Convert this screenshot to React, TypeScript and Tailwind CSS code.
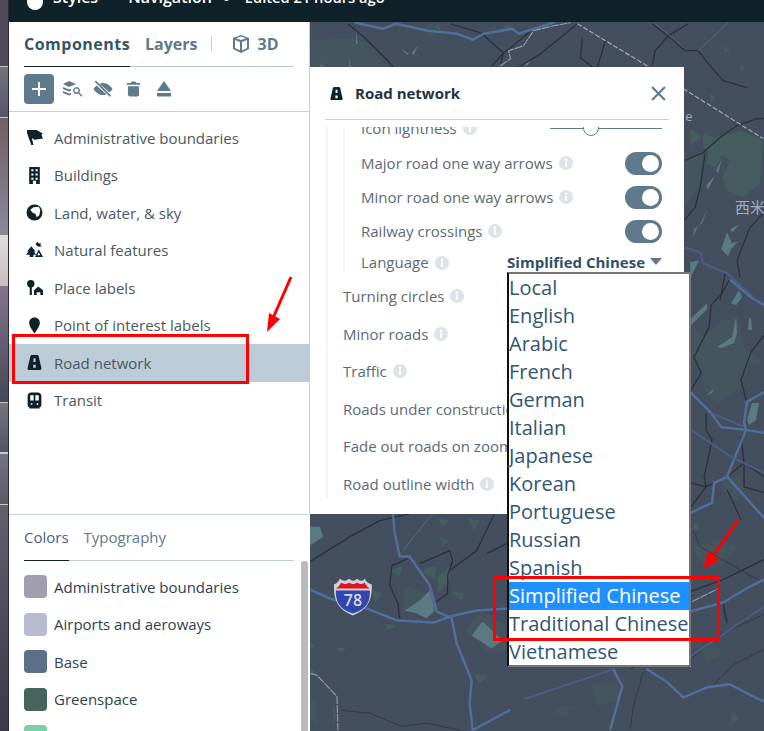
import React from "react";

const Icons: Record<string, React.ReactNode> = {
  flag: <path fill="currentColor" d="M1 1h9l6 3.500-1.500 1L16 9l-8 1-2.500-1.500L7 15 5 15 1 4z" />,
  building: <path fill="currentColor" fillRule="evenodd" d="M3 0h10v16H9.500v-3h-3v3H3zM5 2v2h2V2zm4 0v2h2V2zM5 6v2h2V6zm4 0v2h2V6zM5 10v2h2v-2zm4 0v2h2v-2z" />,
  globe: <path fill="currentColor" fillRule="evenodd" d="M8 0.500a7.500 7.500 0 1 0 0 15 7.500 7.500 0 0 0 0-15zM7 3l5-.500 1.500 3-1 5-2.500 2-1-3-3-1.500L4 5.500z" />,
  nature: <path fill="currentColor" fillRule="evenodd" d="M5 4l4 5H7.500l2 3H7v2H3.500v-2H0l2.500-3H1zM12 7l4 7h-7.500zm0 2.800L10.500 12.500h3zM11 0l1 1.500L14 1l-.500 2 1.500 1-3 .500L10 3.500 9 1.500z" />,
  place: <path fill="currentColor" fillRule="evenodd" d="M4.500 1a3.500 3.500 0 0 1 3.500 3.500c0 1.500-.8 3-2.500 3.500v7h-2V8C2 7.500 1 6 1 4.500A3.500 3.500 0 0 1 4.500 1zM11.500 7L16 10.500V15h-2.500v-2.500h-3.500V15H7.500v-4.500z" />,
  pin: <path fill="currentColor" d="M8 0.500c3 0 5 2.300 5 5 0 3.500-3 7-5 10-2-3-5-6.500-5-10 0-2.700 2-5 5-5z" />,
  road: <path fill="currentColor" fillRule="evenodd" d="M5.500 1h5c.7 0 1.200.4 1.400 1.100L14.500 13.500c.2 1-.4 1.500-1.200 1.500H2.700c-.8 0-1.400-.5-1.200-1.500L4.100 2.100C4.300 1.400 4.800 1 5.500 1zM7 4v3.500h2V4zM6.800 10v3h2.400v-3z" />,
  transit: <path fill="currentColor" fillRule="evenodd" d="M5 0.500h6c2.200 0 3.500 1.300 3.500 3.500v8c0 1.500-.9 2.500-2 2.800L13 15.500H3l.5-.7c-1.100-.3-2-1.300-2-2.800V4C1.500 1.800 2.800.500 5 .500zM4 3v5h3.200V3zm4.800 0v5H12V3zM4.500 10.500v1.500H6v-1.500zm5.500 0v1.500h1.500v-1.500z" />,
};

function Icon({ name, className }: { name: string; className: string }) {
  return (
    <svg viewBox="0 0 16 16" className={className}>
      {Icons[name]}
    </svg>
  );
}

function Info() {
  return (
    <svg viewBox="0 0 14 14" className="w-[14px] h-[14px] shrink-0 ml-[6px]">
      <circle cx="7" cy="7" r="7" fill="#dde3e9" />
      <circle cx="7" cy="3.800" r="1.200" fill="#fff" />
      <rect x="6" y="5.800" width="2" height="5.200" fill="#fff" />
    </svg>
  );
}

function Toggle() {
  return (
    <div className="w-[37px] h-[23px] rounded-full bg-[#5f7a8c] flex items-center justify-end pr-[3px]">
      <div className="w-[17px] h-[17px] rounded-full bg-white" />
    </div>
  );
}

const components = [
  ["flag", "Administrative boundaries"],
  ["building", "Buildings"],
  ["globe", "Land, water, & sky"],
  ["nature", "Natural features"],
  ["place", "Place labels"],
  ["pin", "Point of interest labels"],
  ["road", "Road network"],
  ["transit", "Transit"],
];

const swatches = [
  ["bg-[#a09fb0]", "Administrative boundaries"],
  ["bg-[#b8bcd0]", "Airports and aeroways"],
  ["bg-[#5a7088]", "Base"],
  ["bg-[#46635c]", "Greenspace"],
  ["bg-[#7dd0a5]", ""],
];

const languages = [
  "Local", "English", "Arabic", "French", "German", "Italian", "Japanese", "Korean",
  "Portuguese", "Russian", "Spanish", "Simplified Chinese", "Traditional Chinese", "Vietnamese",
];

function MapArt() {
  const soft = "#45555e";
  const green = "#455d5f";
  const lake = "#5a7a84";
  const blue = "#526e9b";
  const purple = "#4d5b85";
  const dark = "#2b3138";
  const thin = "#343b44";
  return (
    <svg viewBox="309 22 455 709" className="absolute inset-0 w-full h-full" fill="none">
      <g className="blur-[0.4px]">
        <g fill={soft}>
          <path d="M310 40l40-3 17 6 20 24h-77zM691 323l13 14 17-17 16-3 7 30 20 16h-13l-10 24-24 16-13-10-3-16-7-17-3-7zM685 160l18-8-4 35-14 20zM693 547l30-7 14 7-14 20-20 0zM404 586l22 8 10 20-34-3zM464 631l16-19 25 13 1 25-17 4zM590 687l27-4 3 17-23 7zM557 707l16 0-6 10-14-4zM309 700l8 5 0 20-8-3zM420 30l10-8 6 10-8 6zM720 480l20-2 6 18-16 6zM700 650l12-10 10 15-15 8z" />
        </g>
        <g fill={green}>
          <path d="M703 133l12 4 25-7 23 10-3 43-17 14-16-7-5-13 8-17-8-5-6 12-9-4 1-11-5-5zM437 577l12-10 0 14-12 13zM387 571l15-4-3 9zM372 591l10 3-8 9zM384 624l12 2-10 5zM334 649l12-1-6 5zM424 569l12-2-2 12-11-5zM451 592l12 2-2 8zM472 674l15 3-8 7zM437 518l12 3-7 7zM439 537l10 3-7 7zM467 518l12 3-5 10zM309 667l7 7-5 3zM309 642l5 4-5 4zM332 702l3 15-3 10zM733 710l5 10-8 7zM724 45l6 5-6 3zM710 93l6 4-5 5zM740 64l5 3-4 4zM500 30l8-8 3 8zM433 27l5-5 2 8zM690 530l7-8 2 8zM690 128l12 8-12 10z" />
        </g>
        <g fill={lake}>
          <path d="M309 527l10 0 3 10-13 9zM404 611l15-10 10-10 5 20-8 8-10-5zM471 636l11-14 20 19-11 8zM691 318l16-15 0 6-16 16zM731 303l8-13 3 7-6 8zM749 318l2 0 1 12-4 0zM717 347l15-10 4-20 1 16-3 10-12 5zM707 395l7-7-2 5zM747 420l5-17 7 0-3 17-7 5zM355 30l2 13-2 0zM400 48l8 5-2 1zM417 45l-4 10-2-3zM320 62l3 5-3 0zM348 58l2 9-2 0zM530 60l-3 5-4-2zM715 175l-7 14-2-4zM722 158l-6 12 2 3zM707 209l-5 14 -3 3zM698 225l-5 12 1-8zM739 224l-6 8-3-3zM727 232l-6 17 7 7 3-7 7-8-6 2zM690 262l9-2-9 18z" />
        </g>
        <g stroke={thin} strokeWidth="1" strokeLinejoin="round">
          <path d="M341 711l28 3 32 13 25-3 33 7M643 673l-10 34-3 23M723 610l4 15M693 530l7 17 57 33M600 640l40-20 50-10M630 670l30-20 30-10M690 660l30-25 44-20M764 650l-30 15-20 20" />
        </g>
        <g stroke={dark} strokeWidth="1.300" strokeLinejoin="round">
          <path d="M309 562l40-25 30-16 30-7M389 586l2-20 16-7M389 586l8 18 2 15M419 564l30-13 3 10-5 15 0 18-11 8M449 571l27-20 13-27 5-10M486 554l20-10M347 23l20 17 20 20 6 7M450 23l30 9 23 20-3 11M533 28l-23 19-7 5-13 15M577 23l-37 30-23 14M582 37l-2 20 13 10M605 40l-8 27M652 23l16 12-13 15-3 15M668 35l17 15 13 0 10 13 15 17 24 7M688 23l-20 12M685 160l18-8 17-15 17-12 20-7h7M705 153l-5 34-5 20-11 13M763 213l-13 14-13 33 3 17M725 273l-5 27M729 280l-7 13-11 12-2 22-15 30 7 16-10 17M764 335l-13 17-10 28 5 20M706 413v17l6 10-8 37 2 10-15 20M691 483l15 4 21-10 17-14 20 14M741 437l3 26 0 24 20 6M727 490l14 30M690 592l33-12 41-20M723 603l4 20" />
        </g>
        <g stroke={blue} strokeWidth="2.500" strokeLinejoin="round" strokeLinecap="round">
          <path d="M355 22l27 6 13-5 32 7 30 3 15 6 11-6 29-5 6 5 35-11" />
          <path d="M309 590l20 9 37 10 30 12 38 2 15-6 27-6 33-2" />
          <path d="M392 514l2 20 5 23h10l20 29 7 26 15 7 5 25 15 37-2 23 3 27 37-20" />
          <path d="M690 612l33-9 27-16 14-7M613 670l9 17-12 43M647 670l20 13 16 15 24-10 23-3 23 12 11 5" />
          <path d="M691 393l20 20 10 14 25 3 18 3M764 392l-17 10-3 21 2 7-19 47-13 6-2 20-21 10M727 477l27 30 10 11M731 280l20 17 13 8" />
        </g>
        <g stroke={purple} strokeWidth="2" strokeLinejoin="round">
          <path d="M523 700l90-30M690 657l74-50M691 430l40 27 33 16M711 413l33 14M685 247l15 5 3 11 24 10 30 27" />
        </g>
        <path d="M577 23l73 44M683 88l80 50" stroke="#a4a7b5" strokeWidth="1.200" strokeDasharray="5 2" />
        <path d="M500 65l10-7-2-8 15-5 10-15 20-5 17-3M309 674l7 2 20 21 1 34M692 602l28-14" stroke="#9a9eac" strokeWidth="1.100" strokeDasharray="8 1" />
        <path d="M402 551l20-25 10-12M655 23l30 25M698 50l30-28" stroke="#5f7078" strokeWidth="0.800" />
      </g>
      <g>
        <path d="M333 585c3-1 5-3 6-6 3 3 7 3 9 0 3 3 6 3 8 0 3 3 6 3 8 0 1 3 3 5 7 6 0 12-1 24-19 31-18-7-19-19-19-31z" fill="#cfd2d6" />
        <path d="M335 589c2-1 4-3 5-6 3 2 6 2 8 0 3 2 6 2 8 0 3 2 5 2 8 0 1 3 3 5 5 6z" fill="#e2141e" />
        <path d="M335 591h34c0 9-1 18-17 23-16-5-17-14-17-23z" fill="#2f47ae" />
        <text x="352" y="607" textAnchor="middle" fontFamily="'Open Sans', sans-serif" fontSize="16" fontWeight="600" fill="#d8dbe0">78</text>
      </g>
      <text x="735" y="213" fontFamily="'Noto Sans CJK SC', sans-serif" fontSize="15" fill="#9fb0c4">西米</text>
      <text x="685" y="120" fontFamily="'Open Sans', sans-serif" fontSize="13" fill="#9fb0c4">e</text>
    </svg>
  );
}

export default function App() {
  return (
    <div className="relative w-[764px] h-[731px] overflow-hidden flex font-['Open_Sans',sans-serif]">
      <div className="w-[9px] shrink-0 flex flex-col border-r border-[#2b2b33]">
        <div className="h-[66px] bg-[#50495a]" />
        <div className="h-[52px] bg-linear-to-b from-[#74747c] to-[#55556a] border-y border-[#c8c8c8]" />
        <div className="h-[117px] bg-linear-to-b from-[#6f5f66] to-[#8a8a98]" />
        <div className="h-[51px] bg-linear-to-b from-[#dddddd] to-[#cbbcbc]" />
        <div className="h-[116px] bg-linear-to-b from-[#85758a] to-[#45475a]" />
        <div className="h-[51px] bg-linear-to-b from-[#75757d] to-[#4f5563] border-y border-[#c8c8c8]" />
        <div className="h-[52px] bg-linear-to-b from-[#757580] to-[#5a5a65] border-y border-[#c8c8c8]" />
        <div className="flex-1 bg-linear-to-b from-[#62606a] to-[#3a3a44]" />
      </div>
      <div className="flex-1 flex flex-col min-w-0">
        <header className="h-[22px] shrink-0 bg-[#0f2229] overflow-hidden flex items-center pl-[18px] text-white font-semibold text-[16px] leading-[20px]">
          <div className="w-[16px] h-[16px] rounded-full bg-white -mt-[19px] shrink-0" />
          <span className="ml-[10px] -mt-[28px]">Styles</span>
          <span className="ml-[30px] -mt-[28px]">Navigation</span>
          <span className="ml-[12px] w-[5px] h-[5px] rounded-full bg-white -mt-[26px] shrink-0" />
          <span className="ml-[16px] -mt-[28px] text-[14.7px]">Edited 21 hours ago</span>
        </header>
        <div className="flex-1 flex min-h-0">
          <aside className="w-[301px] shrink-0 bg-white flex flex-col relative">
            <div className="flex-1 border-r border-[#c3d0da] flex flex-col">
              <div className="mx-[15px] w-[270px] h-[45px] border-b border-[#b9c9d6] flex items-center relative pb-[1px] font-bold text-[16px]">
                <span className="text-[#34546a] w-[121px] tracking-[0.5px]">Components</span>
                <span className="text-[#5f7a8c]">Layers</span>
                <span className="w-px h-[15px] bg-[#c3d0da] ml-[14px] mr-[20px]" />
                <svg viewBox="0 0 18 18" className="w-[18px] h-[18px] text-[#5f7a8c]" fill="currentColor">
                  <path fillRule="evenodd" d="M9 0l8 3v11l-8 4-8-4V3zM3 5v8l5 2.500V7zm12 0l-5 2v8.500l5-2.500zM4 3.200L9 5l5-1.800L9 1.500z" />
                </svg>
                <span className="text-[#5f7a8c] ml-[7px]">3D</span>
                <span className="absolute left-0 -bottom-px w-[106px] h-px bg-[#0f2229]" />
              </div>
              <div className="h-[45px] border-b border-[#c3d0da] flex items-center pl-[15px] text-[#5f7a8c] shrink-0">
                <div className="w-[30px] h-[30px] rounded-[4px] bg-[#5f7a8c] flex items-center justify-center">
                  <svg viewBox="0 0 16 16" className="w-[16px] h-[16px]"><path d="M8 1v14M1 8h14" stroke="#fff" strokeWidth="2" /></svg>
                </div>
                <svg viewBox="0 0 20 16" className="w-[20px] h-[16px] ml-[9px]" fill="currentColor">
                  <path d="M6 0l7 3-7 3-6-3zM0 6l6 2.500 2-.800v2l-2 .800L0 8zM0 10l6 2.500 2-.800v2l-2 .800-6-2.500zM13.500 6a3.500 3.500 0 0 1 2.800 5.600l3.200 3.200-1 1-3.200-3.200A3.500 3.500 0 1 1 13.500 6zm0 1.500a2 2 0 1 0 0 4 2 2 0 0 0 0-4z" />
                </svg>
                <svg viewBox="0 0 20 18" className="w-[20px] h-[18px] ml-[10px]" fill="currentColor">
                  <path d="M10 3c4.500 0 8 3.500 9.500 6-.7 1.200-1.700 2.500-3 3.500L6.500 3.700C7.500 3.300 8.700 3 10 3zM3.500 5.500l10 9c-1.100.4-2.300.6-3.500.6-4.500 0-8-3.600-9.500-6.100.7-1.300 1.700-2.500 3-3.500zM3 .500L18 15.500l-1.300 1.300L1.700 1.800z" />
                </svg>
                <svg viewBox="0 0 14 16" className="w-[13px] h-[16px] ml-[14px]" fill="currentColor">
                  <path d="M5 0h4l1 1.500h4v2H0v-2h4zM1 5h12v9c0 1.200-.8 2-2 2H3c-1.200 0-2-.8-2-2z" />
                </svg>
                <svg viewBox="0 0 14 16" className="w-[14px] h-[16px] ml-[17px]" fill="currentColor">
                  <path d="M7 0l7 10H0zM0 12h14v3.500H0z" />
                </svg>
              </div>
              <ul className="pt-[7px] flex flex-col">
                {components.map(([ic, label]) => (
                  <li
                    key={label}
                    className={`h-[37.5px] flex items-center pl-[17px] text-[15px] text-[#4a5862] -mr-px ${label === "Road network" ? "bg-[#bccbd8]" : ""}`}
                  >
                    <Icon name={ic} className="w-[17px] h-[17px] text-[#0f2229] shrink-0" />
                    <span className="ml-[11px]">{label}</span>
                  </li>
                ))}
              </ul>
            </div>
            <div className="h-[217px] w-[300px] shrink-0 border-t border-[#c3d0da] bg-white overflow-hidden relative">
              <div className="mx-[15px] w-[270px] h-[46px] border-b border-[#b9c9d6] flex items-center gap-[15px] text-[15px] text-[#5f7a8c] relative">
                <span className="text-[#466080]">Colors</span>
                <span>Typography</span>
                <span className="absolute left-0 -bottom-px w-[45px] h-px bg-[#0f2229]" />
              </div>
              <div className="absolute right-[1px] top-[46px] bottom-0 w-[7px] rounded-t-[3px] bg-[#bbbbbb]" />
              <ul className="pt-[7px] flex flex-col">
                {swatches.map(([c, label], i) => (
                  <li key={i} className="h-[37.5px] flex items-center pl-[15px] text-[15px] text-[#2f4050]">
                    <span className={`w-[23px] h-[23px] rounded-[4px] shrink-0 ${c}`} />
                    <span className="ml-[7px]">{label}</span>
                  </li>
                ))}
              </ul>
            </div>
          </aside>
          <main className="flex-1 relative bg-[#434e5e] min-w-0 overflow-hidden">
            <MapArt />
            <section className="absolute left-0 top-[45px] w-[374px] h-[447px] bg-white flex flex-col text-[15px] text-[#5a6a76]">
              <div className="h-[53px] mx-[15px] border-b border-[#c3d0da] flex items-center shrink-0">
                <Icon name="road" className="w-[15px] h-[15px] text-[#0f2229] ml-[4px] shrink-0" />
                <span className="ml-[11px] font-bold text-[#22343f]">Road network</span>
                <svg viewBox="0 0 14 14" className="w-[15px] h-[15px] ml-auto mr-[3px]"><path d="M1 1l12 12M13 1L1 13" stroke="#5f7a8c" strokeWidth="2" /></svg>
              </div>
              <div className="h-[371px] ml-[16px] relative overflow-hidden mt-[7px] border-l-2 border-[#f3f5f7]">
                <div className="-mt-[17px]">
                  <div className="ml-[15px] pl-[16px] border-l-2 border-[#f3f5f7] w-[319px] h-[162px] flex flex-col">
                    <div className="h-[36px] shrink-0 flex items-center">
                      <span>Icon lightness</span><Info />
                      <div className="ml-auto w-[112px] h-px bg-[#5f7a8c] relative">
                        <span className="absolute left-[33px] -top-[8px] w-[16px] h-[16px] rounded-full bg-white border border-[#5f7a8c]" />
                      </div>
                    </div>
                    <div className="h-[34px] shrink-0 flex items-center"><span>Major road one way arrows</span><Info /><span className="ml-auto"><Toggle /></span></div>
                    <div className="h-[34px] shrink-0 flex items-center"><span>Minor road one way arrows</span><Info /><span className="ml-auto"><Toggle /></span></div>
                    <div className="h-[34px] shrink-0 flex items-center"><span>Railway crossings</span><Info /><span className="ml-auto"><Toggle /></span></div>
                    <div className="h-[29px] shrink-0 flex items-center"><span>Language</span><Info />
                      <span className="ml-auto font-bold text-[#2f5068]">Simplified Chinese</span>
                      <svg viewBox="0 0 12 7" className="w-[12px] h-[7px] ml-[5px] mb-[2px]"><path d="M0 0h12L6 7z" fill="#5f7a8c" /></svg>
                    </div>
                  </div>
                  <div className="pl-[15px] mt-[5.5px] flex flex-col">
                    {["Turning circles", "Minor roads", "Traffic", "Roads under construction", "Fade out roads on zoom", "Road outline width"].map((t, i) => (
                      <div key={t} className="h-[37.5px] flex items-center">
                        <span>{t}</span>
                        {i < 3 || i === 5 ? <Info /> : null}
                      </div>
                    ))}
                  </div>
                </div>
              </div>
            </section>
            <div className="absolute left-[197px] top-[250px] w-[184px] h-[395px] bg-white border-2 border-l-[#111] border-t-[#777] border-r-[#777] border-b-[#777] text-[20px] leading-[28px] text-[#2f5675] flex flex-col">
              {languages.map((l) => (
                <div key={l} className={`h-[28px] shrink-0 whitespace-nowrap ${l === "Simplified Chinese" ? "bg-[#1e90ff] text-white" : ""}`}>{l}</div>
              ))}
            </div>
          </main>
        </div>
      </div>
      <div className="absolute left-[12px] top-[334px] w-[237px] h-[50px] border-[3px] border-[#ff0000]" />
      <div className="absolute left-[493px] top-[576px] w-[227px] h-[65px] border-[3px] border-[#ff0000]" />
      <svg viewBox="0 0 764 731" className="absolute inset-0 w-full h-full pointer-events-none">
        <path d="M291 277L273 318" stroke="#ff0000" strokeWidth="3" />
        <path d="M267 332L269 313 280 319z" fill="#ff0000" />
        <path d="M738 520L712 557" stroke="#ff0000" strokeWidth="3" />
        <path d="M703 569L708 551 719 560z" fill="#ff0000" />
      </svg>
    </div>
  );
}
